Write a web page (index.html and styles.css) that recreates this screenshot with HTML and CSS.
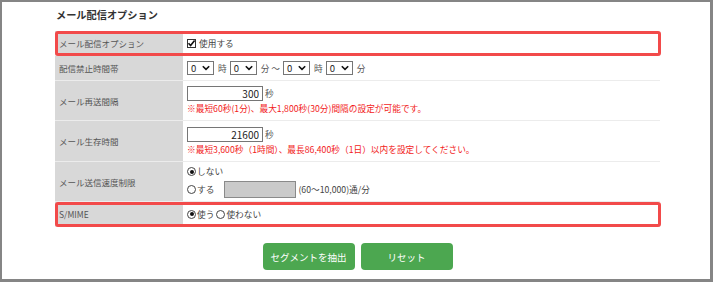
FILE: index.html
```html
<!DOCTYPE html>
<html lang="ja">
<head>
  <meta charset="UTF-8" />
  <meta name="viewport" content="width=device-width, initial-scale=1" />
  <title>メール配信オプション</title>
  <link rel="stylesheet" href="styles.css">
</head>
<body>
  <div class="frame">
    <h2 class="title">メール配信オプション</h2>

    <div class="form">
      <div class="row mark h24">
        <div class="label">メール配信オプション</div>
        <div class="value line">
          <span class="check">
            <svg width="9" height="9" viewBox="0 0 9 9"><path d="M1.5 4.3 L3.6 6.6 L7.6 1.6" fill="none" stroke="#111" stroke-width="1.6"/></svg>
          </span>
          <span class="txt">使用する</span>
        </div>
      </div>

      <div class="row h25">
        <div class="label">配信禁止時間帯</div>
        <div class="value line">
          <span class="sel">0<svg width="8" height="6" viewBox="0 0 8 6"><path d="M0.8 1.2 L4 4.4 L7.2 1.2" fill="none" stroke="#111" stroke-width="1.6"/></svg></span><span class="unit">時</span>
          <span class="sel">0<svg width="8" height="6" viewBox="0 0 8 6"><path d="M0.8 1.2 L4 4.4 L7.2 1.2" fill="none" stroke="#111" stroke-width="1.6"/></svg></span><span class="unit">分 〜</span>
          <span class="sel">0<svg width="8" height="6" viewBox="0 0 8 6"><path d="M0.8 1.2 L4 4.4 L7.2 1.2" fill="none" stroke="#111" stroke-width="1.6"/></svg></span><span class="unit">時</span>
          <span class="sel">0<svg width="8" height="6" viewBox="0 0 8 6"><path d="M0.8 1.2 L4 4.4 L7.2 1.2" fill="none" stroke="#111" stroke-width="1.6"/></svg></span><span class="unit">分</span>
        </div>
      </div>

      <div class="row h40">
        <div class="label">メール再送間隔</div>
        <div class="value stack">
          <div class="line"><input class="num" type="text" value="300" /><span class="unit">秒</span></div>
          <div class="note">※最短60秒(1分)、最大1,800秒(30分)間隔の設定が可能です。</div>
        </div>
      </div>

      <div class="row h41">
        <div class="label">メール生存時間</div>
        <div class="value stack">
          <div class="line"><input class="num" type="text" value="21600" /><span class="unit">秒</span></div>
          <div class="note">※最短3,600秒（1時間）、最長86,400秒（1日）以内を設定してください。</div>
        </div>
      </div>

      <div class="row h40">
        <div class="label">メール送信速度制限</div>
        <div class="value stack gap3">
          <div class="line"><span class="radio on"></span><span class="txt">しない</span></div>
          <div class="line"><span class="radio"></span><span class="txt">する</span><span class="rate"></span><span class="txt">(60～10,000)通/分</span></div>
        </div>
      </div>

      <div class="row mark h25">
        <div class="label">S/MIME</div>
        <div class="value line">
          <span class="radio on"></span><span class="txt">使う</span>
          <span class="radio sp"></span><span class="txt">使わない</span>
        </div>
      </div>
    </div>

    <div class="buttons">
      <button class="btn">セグメントを抽出</button>
      <button class="btn">リセット</button>
    </div>
  </div>
</body>
</html>
```

FILE: styles.css
```css
body {
  margin: 0;
  font-family: "Noto Sans CJK JP", "Noto Sans", sans-serif;
  color: #444;
}
.frame {
  width: 713px;
  height: 282px;
  box-sizing: border-box;
  border: 2px solid #858585;
  border-right-width: 3px;
  border-bottom-width: 3px;
  padding: 6px 0 0 53px;
  background: #fff;
}
.title {
  margin: 0 0 9px 1px;
  font-size: 10.2px;
  line-height: 14px;
  font-weight: bold;
  color: #333;
}
.form {
  width: 605px;
}
.row {
  display: grid;
  grid-template-columns: 128px 1fr;
  border-bottom: 1px solid #ececec;
  position: relative;
}
.h24 { height: 24px; }
.h25 { height: 24px; }
.h40 { height: 39px; }
.h41 { height: 40px; }
.row.mark::after {
  content: "";
  position: absolute;
  left: 0;
  top: 0;
  right: -1px;
  bottom: -1px;
  border: 3px solid #f24a4a;
  border-radius: 3px;
}
.label {
  background: #d8d8d8;
  display: flex;
  align-items: center;
  padding-left: 4px;
  font-size: 8.5px;
  color: #555;
}
.value {
  padding-left: 4px;
  font-size: 8.7px;
}
.line {
  display: flex;
  align-items: center;
}
.stack {
  display: flex;
  flex-direction: column;
  justify-content: center;
  gap: 2px;
}
.gap3 {
  gap: 3px;
}
.txt {
  color: #444;
}
.unit {
  margin: 0 3px 0 4px;
  color: #555;
}
.sel {
  width: 27px;
  height: 14px;
  box-sizing: border-box;
  border: 1px solid #767676;
  background: #fff;
  color: #222;
  font-size: 9.5px;
  display: inline-flex;
  align-items: center;
  justify-content: space-between;
  padding: 0 3px 0 3px;
}
.num {
  width: 76px;
  height: 15px;
  box-sizing: border-box;
  border: 1px solid #767676;
  padding: 0 3px;
  text-align: right;
  font-size: 10px;
  font-family: inherit;
  color: #222;
}
.num + .unit {
  margin-left: 2px;
}
.note {
  color: #f21a1a;
  font-size: 8.7px;
  line-height: 12px;
}
.check {
  width: 9px;
  height: 9px;
  box-sizing: border-box;
  border: 1px solid #333;
  background: #fff;
  display: inline-flex;
  margin: 0 3px 0 0;
}
.check svg {
  margin: -1px;
}
.radio {
  width: 9px;
  height: 9px;
  box-sizing: border-box;
  border: 1px solid #444;
  border-radius: 50%;
  background: #fff;
  display: inline-flex;
  align-items: center;
  justify-content: center;
  margin-right: 1px;
}
.radio.on::after {
  content: "";
  width: 4px;
  height: 4px;
  border-radius: 50%;
  background: #111;
}
.radio.sp {
  margin-left: 2px;
}
.rate {
  width: 72px;
  height: 17px;
  box-sizing: border-box;
  border: 1px solid #8a8a8a;
  background: #cacaca;
  margin: 0 2px 0 10px;
}
.buttons {
  width: 605px;
  display: flex;
  justify-content: center;
  gap: 6px;
  margin-top: 16px;
}
.btn {
  width: 92px;
  height: 27px;
  border: none;
  border-radius: 4px;
  background: #4ca750;
  color: #fff;
  font-family: inherit;
  font-size: 9.5px;
  cursor: pointer;
}
```
